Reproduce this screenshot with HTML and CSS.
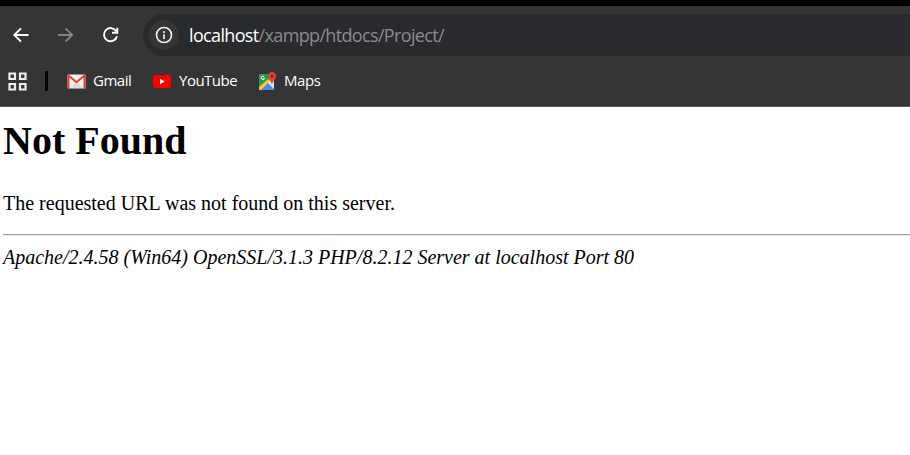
FILE: index.html
```html
<!DOCTYPE html>
<html lang="en">
<head>
<meta charset="utf-8">
<title>404 Not Found</title>
<link rel="stylesheet" href="styles.css">
</head>
<body>
<header class="chrome">
  <div class="toolbar">
    <svg class="nav" viewBox="0 0 20 20"><path d="M17.500 10H4M10 3.300 3.300 10l6.700 6.700"/></svg>
    <svg class="nav nav-off" viewBox="0 0 20 20"><path d="M2 10H15.500M9.500 3.300l6.700 6.700-6.700 6.700"/></svg>
    <svg class="nav" viewBox="0 0 20 20"><path d="M15.300 6.400A6.600 6.600 0 1 0 16 11.200M16.300 2.700v5.100h-5.300"/></svg>
    <div class="omnibox">
      <span class="info"><svg viewBox="0 0 18 18"><circle cx="9" cy="9" r="7.500"/><path d="M9 8.200v4.800M9 4.900v2"/></svg></span>
      <span class="url"><b>localhost</b>/xampp/htdocs/Project/</span>
    </div>
  </div>
  <nav class="bookmarks">
    <svg class="apps" viewBox="0 0 19 19"><path d="M1.500 1.500h5.500v5.500H1.500zM12 1.500h5.500v5.500H12zM1.500 12h5.500v5.500H1.500zM12 12h5.500v5.500H12z"/></svg>
    <i class="divider"></i>
    <a class="mark gmail"><svg width="19" height="15" viewBox="0 0 19 15"><rect x=".5" y=".5" width="18" height="14" rx="1" fill="#eee"/><path d="M3 14l6.500-6 6.500 6" fill="#dcdcdc"/><path d="M1.500 14.500V1.500l8 6.700 8-6.700v13" fill="none" stroke="#d9453c" stroke-width="2"/></svg><span>Gmail</span></a>
    <a class="mark youtube"><svg width="18" height="13" viewBox="0 0 18 13"><rect width="18" height="13" rx="3" fill="#f00"/><path d="M7 3.800v5.400l4.700-2.700z" fill="#fff"/></svg><span>YouTube</span></a>
    <a class="mark maps"><svg width="18" height="18" viewBox="0 0 18 18"><path d="M1 2h15v16H1z" fill="#e8eaed"/><path d="M1 2h11v5L1 17z" fill="#259b56"/><path d="M9 10l7 7v1H2z" fill="#4a8af5"/><path d="M10 9l6 7V6z" fill="#e1e3e6"/><path d="M1 15l9-8 2 2-9 9H1z" fill="#fbc62f"/><path d="M6.300 5a1.700 1.700 0 1 0 .2 1.500H5" fill="none" stroke="#fff"/><path d="M14 0a4 4 0 0 1 4 4.200c0 3-3.200 4.200-4 8.300-.8-4.100-4-5.300-4-8.300A4 4 0 0 1 14 0z" fill="#dc4436"/><circle cx="14" cy="4.200" r="1.400" fill="#7b231c"/></svg><span>Maps</span></a>
  </nav>
</header>
<main class="page">
  <h1><span>Not Found</span></h1>
  <p><span>The requested URL was not found on this server.</span></p>
  <hr>
  <address><span>Apache/2.4.58 (Win64) OpenSSL/3.1.3 PHP/8.2.12 Server at localhost Port 80</span></address>
</main>
</body>
</html>
```
FILE: styles.css
```css
body { margin: 0; background: #fff; overflow: hidden; }
.chrome {
  box-sizing: border-box;
  height: 107px;
  border-top: 6px solid #000;
  border-bottom: 1px solid #5c5c5c;
  background: #353535;
  font-family: "Segoe UI", "Open Sans", "Noto Sans", sans-serif;
}
.toolbar { display: flex; align-items: center; height: 42px; padding: 8px 0 0 11px; }
.nav { flex: none; width: 20px; height: 20px; margin: 0 25px 1px 0; fill: none; stroke: #fff; stroke-width: 1.9; }
.nav-off { stroke: #858585; }
.omnibox {
  display: flex;
  align-items: center;
  flex: 1;
  height: 42px;
  margin-left: -3px;
  border-radius: 21px 0 0 21px;
  background: #292a2d;
}
.info { display: flex; align-items: center; justify-content: center; width: 30px; height: 30px; margin-left: 6px; border-radius: 50%; background: #353535; }
.info svg { width: 18px; height: 18px; fill: none; stroke: #eee; stroke-width: 1.7; }
.url { margin-left: 10px; color: #8b8b8b; font-size: 18px; line-height: 24px; letter-spacing: -0.65px; white-space: nowrap; }
.url b { color: #fff; font-weight: 400; }
.bookmarks { display: flex; align-items: center; height: 50px; padding-left: 8px; }
.apps { width: 19px; height: 19px; fill: none; stroke: #eee; stroke-width: 2.2; }
.divider { width: 3px; height: 20px; margin-left: 18px; border-radius: 1px; background: #000; }
.mark { display: flex; align-items: center; color: #fff; font-size: 15px; line-height: 20px; letter-spacing: -0.5px; }
.mark span { margin-bottom: 2px; }
.gmail { width: 67px; margin-left: 19px; }
.gmail span { margin-left: 7px; }
.youtube { width: 87px; margin-left: 19px; }
.youtube span { margin-left: 8px; }
.maps { margin-left: 18px; letter-spacing: -0.4px; }
.maps span { margin-left: 8px; }
.page { padding: 11px 0 0 3px; color: #000; font-family: "Times New Roman", "Liberation Serif", serif; font-size: 20px; line-height: 23px; }
h1 { margin: 0; font-size: 40px; line-height: 46px; }
p { margin: 28px 0 19px; }
hr { margin: 0; border: 0; border-top: 1px solid #9a9a9a; border-bottom: 1px solid #eee; }
address { margin-top: 10px; }
```
